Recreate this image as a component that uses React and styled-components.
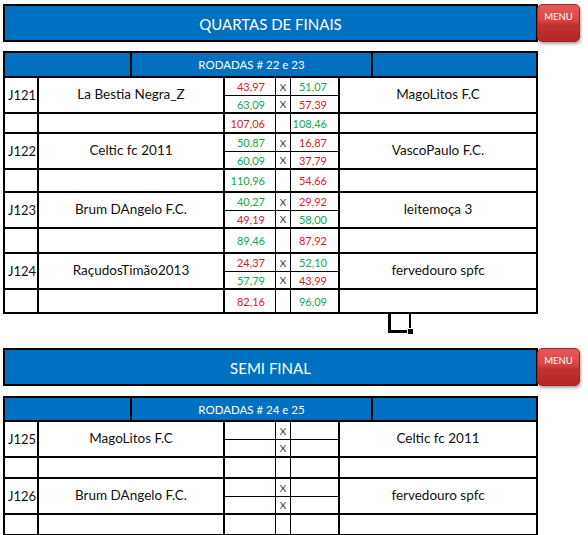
import React from 'react';
import styled, { createGlobalStyle } from 'styled-components';

const GlobalStyle = createGlobalStyle`
  html, body {
    margin: 0;
    padding: 0;
    background: #fff;
  }
  body {
    font-family: Lato, 'Open Sans', sans-serif;
  }
`;

const BLUE = '#0070c0';
const RED = '#e8141f';
const GREEN = '#10a650';

const Page = styled.div`
  width: 588px;
  height: 535px;
  box-sizing: border-box;
  padding: 4px 0 0 3px;
  overflow: hidden;
`;

const Section = styled.section`
  position: relative;
  & + & {
    margin-top: 34px;
  }
`;

const TitleRow = styled.div`
  display: flex;
  align-items: flex-start;
`;

const TitleBar = styled.div`
  width: 535px;
  height: 38px;
  box-sizing: border-box;
  border: 2px solid #000;
  background: ${BLUE};
  color: #fff;
  font-size: 15px;
  display: flex;
  align-items: center;
  justify-content: center;
  padding-top: 1px;
`;

const MenuButton = styled.button`
  width: 43px;
  height: 38px;
  margin-left: -1px;
  box-sizing: border-box;
  border: 1px solid #a42323;
  border-radius: 5px;
  background: linear-gradient(#e65a58 0%, #d84340 45%, #c1302e 55%, #b32826 100%);
  box-shadow: 1px 2px 3px rgba(0, 0, 0, 0.35);
  color: #fff;
  font-family: Lato, sans-serif;
  font-size: 9.5px;
  padding: 6px 0 0;
  display: flex;
  justify-content: center;
  align-items: flex-start;
  cursor: pointer;
`;

const Sheet = styled.div`
  margin-top: ${p => p.$gap}px;
  width: 535px;
  box-sizing: border-box;
  border-top: 2px solid #000;
  border-left: 2px solid #000;
`;

const HeaderRow = styled.div`
  display: grid;
  grid-template-columns: 127px 241px 165px;
  height: ${p => p.$h}px;
`;

const HeaderCell = styled.div`
  box-sizing: border-box;
  background: ${BLUE};
  color: #fff;
  font-size: 11.5px;
  border-right: 2px solid #000;
  border-bottom: 2px solid #000;
  display: flex;
  align-items: center;
  justify-content: center;
`;

const Body = styled.div`
  display: grid;
  grid-template-columns: 34px 186px 51px 15px 49px 198px;
  grid-template-rows: ${p => p.$rows};
`;

const Cell = styled.div`
  box-sizing: border-box;
  border-right: ${p => p.$r ?? 2}px solid #000;
  border-bottom: ${p => p.$b ?? 2}px solid #000;
  grid-row: ${p => (p.$span ? `span ${p.$span}` : 'auto')};
  display: flex;
  align-items: center;
  overflow: hidden;
  white-space: nowrap;
`;

const IdCell = styled(Cell)`
  font-size: 13px;
  padding-left: 3px;
  color: #111;
`;

const TeamCell = styled(Cell)`
  justify-content: center;
  font-size: 13.5px;
  color: #111;
  padding-bottom: 2px;
`;

const ScoreCell = styled(Cell)`
  justify-content: flex-end;
  padding-right: ${p => p.$pad}px;
  font-size: 11px;
  color: ${p => (p.$win ? GREEN : RED)};
`;

const VsCell = styled(Cell)`
  justify-content: center;
  font-size: 10px;
  color: #333;
`;

const Marker = styled.div`
  position: absolute;
  left: 385px;
  top: 100%;
  width: 23px;
  height: 19px;
  box-sizing: border-box;
  border-left: 3px solid #000;
  border-bottom: 3px solid #000;
  border-right: 2px solid #000;

  &::after {
    content: '';
    position: absolute;
    right: -4px;
    bottom: -4px;
    width: 5px;
    height: 5px;
    background: #000;
    border: 1px solid #fff;
    border-right: none;
    border-bottom: none;
  }
`;

const quartas = {
  title: 'QUARTAS DE FINAIS',
  rodada: 'RODADAS # 22 e 23',
  headerH: 25,
  gap: 9,
  matches: [
    { id: 'J121', home: 'La Bestia Negra_Z', away: 'MagoLitos F.C', a: ['43,97', '63,09'], b: ['51,07', '57,39'], tot: ['107,06', '108,46'], sumH: 20 },
    { id: 'J122', home: 'Celtic fc 2011', away: 'VascoPaulo F.C.', a: ['50,87', '60,09'], b: ['16,87', '37,79'], tot: ['110,96', '54,66'], sumH: 23 },
    { id: 'J123', home: 'Brum DAngelo F.C.', away: 'leitemoça 3', a: ['40,27', '49,19'], b: ['29,92', '58,00'], tot: ['89,46', '87,92'], sumH: 25 },
    { id: 'J124', home: 'RaçudosTimão2013', away: 'fervedouro spfc', a: ['24,37', '57,79'], b: ['52,10', '43,99'], tot: ['82,16', '96,09'], sumH: 24 },
  ],
};

const semi = {
  title: 'SEMI FINAL',
  rodada: 'RODADAS # 24 e 25',
  headerH: 24,
  gap: 10,
  matches: [
    { id: 'J125', home: 'MagoLitos F.C', away: 'Celtic fc 2011', sumH: 21 },
    { id: 'J126', home: 'Brum DAngelo F.C.', away: 'fervedouro spfc', sumH: 21 },
  ],
};

const num = s => (s ? parseFloat(s.replace(',', '.')) : 0);

function ScorePair({ a, b, last }) {
  const bottom = last ? 2 : 1;
  const hasScores = a !== undefined;
  return (
    <>
      <ScoreCell $r={1} $b={bottom} $pad={10} $win={hasScores && num(a) > num(b)}>{a}</ScoreCell>
      <VsCell $r={1} $b={bottom}>X</VsCell>
      <ScoreCell $b={bottom} $pad={11} $win={hasScores && num(b) > num(a)}>{b}</ScoreCell>
    </>
  );
}

function Match({ m }) {
  const a = m.a || [];
  const b = m.b || [];
  const tot = m.tot || [];
  return (
    <>
      <IdCell $span={2}>{m.id}</IdCell>
      <TeamCell $span={2}>{m.home}</TeamCell>
      <ScorePair a={a[0]} b={b[0]} />
      <TeamCell $span={2}>{m.away}</TeamCell>
      <ScorePair a={a[1]} b={b[1]} last />
      <Cell />
      <Cell />
      <ScoreCell $r={1} $pad={10} $win={num(tot[0]) > num(tot[1])}>{tot[0]}</ScoreCell>
      <Cell $r={1} />
      <ScoreCell $pad={11} $win={num(tot[1]) > num(tot[0])}>{tot[1]}</ScoreCell>
      <Cell />
    </>
  );
}

function Round({ data, children }) {
  const rows = data.matches.map(m => `18px 18px ${m.sumH}px`).join(' ');
  return (
    <Section>
      <TitleRow>
        <TitleBar>{data.title}</TitleBar>
        <MenuButton>MENU</MenuButton>
      </TitleRow>
      <Sheet $gap={data.gap}>
        <HeaderRow $h={data.headerH}>
          <HeaderCell />
          <HeaderCell>{data.rodada}</HeaderCell>
          <HeaderCell />
        </HeaderRow>
        <Body $rows={rows}>
          {data.matches.map(m => (
            <Match key={m.id} m={m} />
          ))}
        </Body>
      </Sheet>
      {children}
    </Section>
  );
}

export default function App() {
  return (
    <Page>
      <GlobalStyle />
      <Round data={quartas}>
        <Marker />
      </Round>
      <Round data={semi} />
    </Page>
  );
}
